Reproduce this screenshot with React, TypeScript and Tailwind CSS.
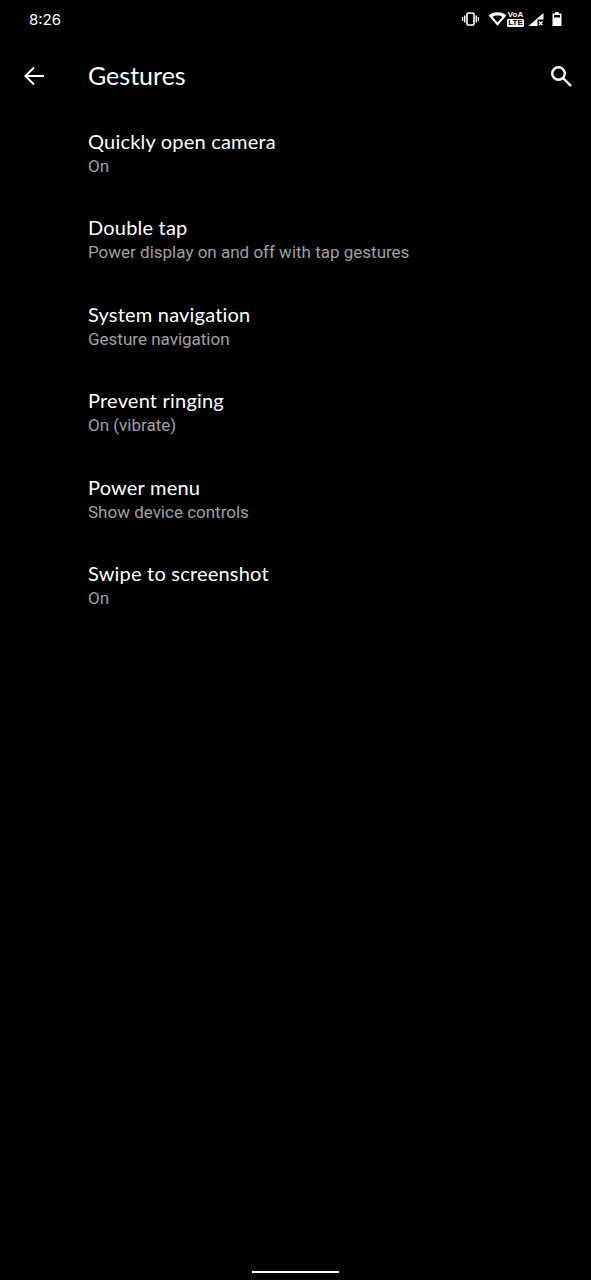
const items: [string, string][] = [
  ["Quickly open camera", "On"],
  ["Double tap", "Power display on and off with tap gestures"],
  ["System navigation", "Gesture navigation"],
  ["Prevent ringing", "On (vibrate)"],
  ["Power menu", "Show device controls"],
  ["Swipe to screenshot", "On"],
];

function StatusIcons() {
  return (
    <div className="flex items-center text-white">
      <svg width="17" height="14" viewBox="0 0 17 14" className="mr-[9px]" fill="none">
        <rect x="5" y="1" width="7" height="12" rx="1.2" stroke="white" strokeWidth="1.6" />
        <path d="M2.700 3.500v7M14.300 3.500v7" stroke="white" strokeWidth="1.5" />
        <path d="M0.600 5v4M16.400 5v4" stroke="white" strokeWidth="1.200" />
      </svg>
      <svg width="19" height="14" viewBox="0 0 18 14">
        <path fillRule="evenodd" d="M0 3.600C2.200 1.500 5.400 0.300 9 0.300s6.800 1.200 9 3.300L9 13.800zM4.200 4.900 9 10.500l4.800-5.600C12.500 4 10.800 3.500 9 3.500s-3.500.5-4.800 1.400z" fill="white" />
      </svg>
      <div className="flex flex-col items-center mr-[4px] w-[17px]">
        <span className="text-[8px] leading-[8px] font-bold text-white font-['Liberation_Sans',sans-serif]">VoA</span>
        <span className="bg-white text-black text-[8px] leading-[8px] font-bold px-[1px] rounded-[1px] font-['Liberation_Sans',sans-serif]">LTE</span>
      </div>
      <svg width="16" height="15" viewBox="0 0 16 14" className="mr-[8px] mt-[1px]">
        <path d="M15.500 0.500V7H9.500V13.500H0.500z" fill="white" />
        <path d="M11 9l3.500 3.500M14.500 9L11 12.500" stroke="white" strokeWidth="1.300" />
      </svg>
      <svg width="10" height="16" viewBox="0 0 10 15">
        <path d="M3.200 0.500h3.600V2H9.500v12.500H0.500V2h2.700z" fill="white" />
        <rect x="2" y="3.500" width="6" height="2.500" fill="black" />
      </svg>
    </div>
  );
}

export default function App() {
  return (
    <div className="w-[591px] h-[1280px] bg-black text-white flex flex-col relative font-['Roboto',sans-serif]">
      <div className="h-[38px] flex items-center justify-between pl-[29px] pr-[29px]">
        <span className="text-[15px] leading-none text-white font-['Inter',sans-serif]">8:26</span>
        <StatusIcons />
      </div>
      <div className="h-[76px] flex items-center pl-[22px] pr-[18px]">
        <svg width="24" height="24" viewBox="0 0 24 24" className="mr-[42px]" fill="none" stroke="white" strokeWidth="2">
          <path d="M22 12H4M12 3.500 3.500 12l8.500 8.500" />
        </svg>
        <span className="text-[25px] leading-none flex-1 font-['Lato',sans-serif] -mt-[1px]">Gestures</span>
        <svg width="24" height="24" viewBox="0 0 24 24" fill="none" stroke="white" strokeWidth="2.400">
          <circle cx="9.500" cy="9.500" r="6.300" />
          <path d="M14 14l8 8" />
        </svg>
      </div>
      <div className="flex flex-col pl-[88px]">
        {items.map(([title, sub]) => (
          <div key={title} className="h-[86.4px] flex flex-col pt-[15px]">
            <span className="text-[20px] leading-[24px] tracking-[0.2px] font-['Lato',sans-serif] text-white">{title}</span>
            <span className="mt-[1px] text-[17px] leading-[25px] text-[#a0a0a0]">{sub}</span>
          </div>
        ))}
      </div>
      <div className="absolute bottom-[7px] left-[252px] w-[87px] h-[2px] bg-white" />
    </div>
  );
}
